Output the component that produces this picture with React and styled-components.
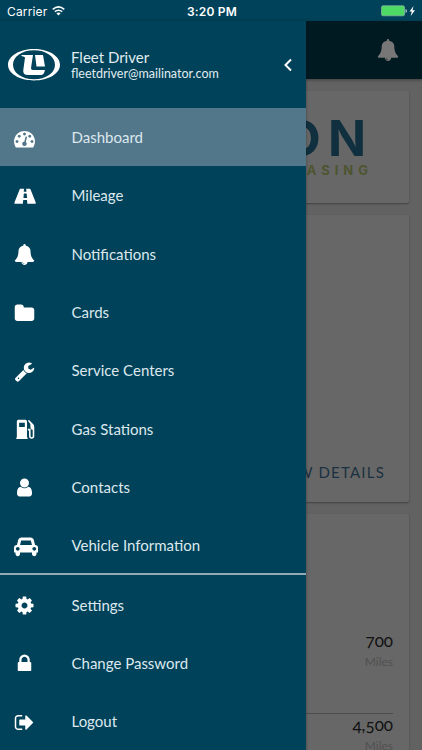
import React from 'react';
import styled, { createGlobalStyle } from 'styled-components';

const GlobalStyle = createGlobalStyle`
    * {
        box-sizing: border-box;
    }
    body {
        margin: 0;
        overflow: hidden;
        font-family: Lato, "Open Sans", sans-serif;
    }
`;

const icons = {
    dashboard: {
        box: '0 0 1792 1792',
        d: 'M384 1152q0-53-37.5-90.5t-90.5-37.5-90.5 37.5-37.5 90.5 37.5 90.5 90.5 37.5 90.5-37.5 37.5-90.5zm192-448q0-53-37.5-90.5t-90.5-37.5-90.5 37.5-37.5 90.5 37.5 90.5 90.5 37.5 90.5-37.5 37.5-90.5zm428 481l101-382q6-26-7.5-48.5t-38.5-29.5-48 6.5-30 39.5l-101 382q-60 5-107 43.5t-63 98.5q-20 77 20 146t117 89 146-20 89-117q16-60-6-117t-72-91zm660-33q0-53-37.5-90.5t-90.5-37.5-90.5 37.5-37.5 90.5 37.5 90.5 90.5 37.5 90.5-37.5 37.5-90.5zm-640-640q0-53-37.5-90.5t-90.5-37.5-90.5 37.5-37.5 90.5 37.5 90.5 90.5 37.5 90.5-37.5 37.5-90.5zm448 192q0-53-37.5-90.5t-90.5-37.5-90.5 37.5-37.5 90.5 37.5 90.5 90.5 37.5 90.5-37.5 37.5-90.5zm320 448q0 261-141 483-19 29-54 29h-1402q-35 0-54-29-141-221-141-483 0-182 71-348t191-286 286-191 348-71 348 71 286 191 191 286 71 348z'
    },
    road: {
        box: '0 0 1920 1792',
        d: 'M1111 1001v-4l-24-320q-1-13-11-22.5t-23-9.5h-186q-13 0-23 9.5t-11 22.5l-24 320v4q-1 12 8 20t21 8h244q12 0 21-8t8-20zm746 451q0 73-46 73h-704q13 0 22-9.5t8-22.5l-20-256q-1-13-11-22.5t-23-9.5h-272q-13 0-23 9.5t-11 22.5l-20 256q-1 13 8 22.5t22 9.5h-704q-46 0-46-73 0-54 26-116l417-1044q8-19 26-33t38-14h339q-13 0-23 9.5t-11 22.5l-15 192q-1 14 8 23t22 9h166q13 0 22-9t8-23l-15-192q-1-13-11-22.5t-23-9.5h339q20 0 38 14t26 33l417 1044q26 62 26 116z'
    },
    bell: {
        box: '0 0 1792 1792',
        d: 'M912 1696q0-16-16-16-59 0-101.5-42.5t-42.5-101.5q0-16-16-16t-16 16q0 73 51.5 124.5t124.5 51.5q16 0 16-16zm816-288q0 52-38 90t-90 38h-448q0 106-75 181t-181 75-181-75-75-181h-448q-52 0-90-38t-38-90q50-42 91-88t85-119.5 74.5-158.5 50-206 19.5-260q0-152 117-282.5t307-158.5q-8-19-8-39 0-40 28-68t68-28 68 28 28 68q0 20-8 39 190 28 307 158.5t117 282.5q0 139 19.5 260t50 206 74.5 158.5 85 119.5 91 88z'
    },
    folder: {
        box: '0 0 1792 1792',
        d: 'M1728 608v704q0 92-66 158t-158 66h-1216q-92 0-158-66t-66-158v-960q0-92 66-158t158-66h320q92 0 158 66t66 158v32h672q92 0 158 66t66 158z'
    },
    wrench: {
        box: '0 0 1792 1792',
        d: 'M448 1472q0-26-19-45t-45-19-45 19-19 45 19 45 45 19 45-19 19-45zm644-420l-682 682q-37 37-90 37-52 0-91-37l-106-108q-38-36-38-90 0-53 38-91l681-681q39 98 114.5 173.5t173.5 114.5zm634-435q0 39-23 106-47 134-164.5 217.5t-258.5 83.5q-185 0-316.5-131.5t-131.5-316.5 131.5-316.5 316.5-131.5q58 0 121.5 16.5t107.5 46.5q16 11 16 28t-16 28l-293 169v224l193 107q5-3 79-48.5t135.5-81 70.5-35.5q15 0 23.5 10t8.5 25z'
    },
    gas: {
        box: '0 0 20 20',
        d: 'M4.2 .8h6.6q1.6 0 1.6 1.6v15.2h.6v1.4h-10.8v-1.4h.5v-15.2q0-1.6 1.5-1.6zm.7 2.7v4h5.4v-4zM13.2 1.6l1.1-.7 3.8 3.8q1.2 1.2 1.2 2.8v9q0 2.3-2.5 2.3t-2.5-2.3v-5.6h-1.1v-1.6h2.6v7.2q0 .8 1 .8t1-.8v-6q-2.2-.8-2.2-3v-2.7z'
    },
    user: {
        box: '0 0 1792 1792',
        d: 'M1536 1399q0 109-62.5 187t-150.5 78h-854q-88 0-150.5-78t-62.5-187q0-85 8.5-160.5t31.5-152 58.5-131 94-89 134.5-34.5q131 128 313 128t313-128q76 0 134.5 34.5t94 89 58.5 131 31.5 152 8.5 160.5zm-256-887q0 159-112.5 271.5t-271.5 112.5-271.5-112.5-112.5-271.5 112.5-271.5 271.5-112.5 271.5 112.5 112.5 271.5z'
    },
    car: {
        box: '0 0 2048 1792',
        d: 'M480 1088q0-66-47-113t-113-47-113 47-47 113 47 113 113 47 113-47 47-113zm36-320h1016l-89-357q-2-8-14-17.5t-21-9.5h-768q-9 0-21 9.5t-14 17.5zm1372 320q0-66-47-113t-113-47-113 47-47 113 47 113 113 47 113-47 47-113zm160-96v384q0 14-9 23t-23 9h-96v128q0 80-56 136t-136 56-136-56-56-136v-128h-1024v128q0 80-56 136t-136 56-136-56-56-136v-128h-96q-14 0-23-9t-9-23v-384q0-93 65.5-158.5t158.5-65.5h28l105-419q23-94 104-157.5t179-63.5h768q98 0 179 63.5t104 157.5l105 419h28q93 0 158.5 65.5t65.5 158.5z'
    },
    cog: {
        box: '0 0 1792 1792',
        d: 'M1152 896q0-106-75-181t-181-75-181 75-75 181 75 181 181 75 181-75 75-181zm512-109v222q0 12-8 23t-20 13l-185 28q-19 54-39 91 35 50 107 138 10 12 10 25t-9 23q-27 37-99 108t-94 71q-12 0-26-9l-138-108q-44 23-91 38-16 136-29 186-7 28-36 28h-222q-14 0-24.5-8.5t-11.5-21.5l-28-184q-49-16-90-37l-141 107q-10 9-25 9-14 0-25-11-126-114-165-168-7-10-7-23 0-12 8-23 15-21 51-66.5t54-70.5q-27-50-41-99l-183-27q-13-2-21-12.5t-8-23.5v-222q0-12 8-23t19-13l186-28q14-46 39-92-40-57-107-138-10-12-10-24 0-10 9-23 26-36 98.5-107.5t94.5-71.5q13 0 26 10l138 107q44-23 91-38 16-136 29-186 7-28 36-28h222q14 0 24.5 8.5t11.5 21.5l28 184q49 16 90 37l142-107q9-9 24-9 13 0 25 10 129 119 165 170 7 8 7 22 0 12-8 23-15 21-51 66.5t-54 70.5q26 50 41 98l183 28q13 2 21 12.5t8 23.5z'
    },
    lock: {
        box: '0 0 1792 1792',
        d: 'M640 768h512v-192q0-106-75-181t-181-75-181 75-75 181v192zm832 96v576q0 40-28 68t-68 28h-960q-40 0-68-28t-28-68v-576q0-40 28-68t68-28h32v-192q0-184 132-316t316-132 316 132 132 316v192h32q40 0 68 28t28 68z'
    },
    logout: {
        box: '0 0 1792 1792',
        d: 'M704 1440q0 4 1 20t.5 26.5-3 23.5-10 19.5-20.5 6.5h-320q-119 0-203.5-84.5t-84.5-203.5v-704q0-119 84.5-203.5t203.5-84.5h320q13 0 22.5 9.5t9.5 22.5q0 4 1 20t.5 26.5-3 23.5-10 19.5-20.5 6.5h-320q-66 0-113 47t-47 113v704q0 66 47 113t113 47h312l11.5 1 11.5 3 8 5.5 7 9 2 13.5zm928-544q0 26-19 45l-544 544q-19 19-45 19t-45-19-19-45v-288h-448q-26 0-45-19t-19-45v-384q0-26 19-45t45-19h448v-288q0-26 19-45t45-19 45 19l544 544q19 19 19 45z'
    }
};

const Icon = ({ name, size = 21 }) => {
    const [, , w, h] = icons[name].box.split(' ').map(Number);
    return (
        <svg viewBox={icons[name].box} height={size} width={size * w / h} fill="currentColor" fillRule="evenodd">
            <path d={icons[name].d} />
        </svg>
    );
};

const Phone = styled.div`
    position: relative;
    display: flex;
    flex-direction: column;
    width: 422px;
    height: 750px;
    overflow: hidden;
    background-color: #626262;
`;

const StatusBar = styled.header`
    display: grid;
    grid-template-columns: 1fr auto 1fr;
    align-items: center;
    flex: none;
    height: 21px;
    padding: 1px 5px 0 7px;
    color: #fff;
    background-color: #004259;
    font-family: Inter, sans-serif;
    font-size: 12px;
`;

const Carrier = styled.div`
    display: flex;
    align-items: center;
    gap: 5px;
    letter-spacing: 0.15px;
`;

const Clock = styled.div`
    font-weight: 600;
    letter-spacing: 0.2px;
`;

const Battery = styled.div`
    display: flex;
    justify-content: flex-end;
`;

const TopBar = styled.div`
    display: flex;
    align-items: center;
    justify-content: flex-end;
    flex: none;
    height: 58px;
    padding-right: 23px;
    color: #777;
    background-color: #001a22;
    box-shadow: 0 1px 3px rgba(0, 0, 0, 0.35);
`;

const Page = styled.main`
    display: flex;
    flex-direction: column;
    gap: 12px;
    padding: 12px 13px 0 12px;
`;

const Card = styled.section`
    display: flex;
    flex-direction: column;
    flex: none;
    align-items: flex-end;
    height: ${({ height }) => height}px;
    border-radius: 2px;
    background-color: #676767;
    box-shadow: 0 1px 2px rgba(0, 0, 0, 0.35);
`;

const Brand = styled.div`
    margin: 19px 36px 0 0;
    color: #11303f;
    font-family: Inter, sans-serif;
    font-size: 50px;
    line-height: 56px;
    font-weight: 700;
    letter-spacing: 7px;
`;

const BrandSub = styled.div`
    margin: -4px 36px 0 0;
    color: #4e5530;
    font-family: Inter, sans-serif;
    font-size: 13px;
    line-height: 16px;
    font-weight: 700;
    letter-spacing: 5px;
`;

const Details = styled.button`
    margin: auto 24px 20px 0;
    padding: 0;
    border: 0;
    background: none;
    color: #1b3141;
    font-family: Lato, sans-serif;
    font-size: 15px;
    line-height: 20px;
    letter-spacing: 1.2px;
`;

const Reading = styled.div`
    display: flex;
    flex-direction: column;
    align-items: flex-end;
    width: 361px;
    height: 84px;
    margin-right: 16px;
    border-bottom: ${({ last }) => (last ? 0 : '1px solid #4c4c4c')};
`;

const Amount = styled.div`
    color: #111;
    font-size: 17px;
    line-height: 22px;
    font-variant-numeric: oldstyle-nums;
`;

const Unit = styled.div`
    color: #505050;
    font-size: 12px;
    line-height: 20px;
`;

const Drawer = styled.nav`
    position: absolute;
    top: 21px;
    left: 0;
    width: 306px;
    height: 729px;
    color: #fff;
    background-color: #004259;
    box-shadow: 1px 0 2px rgba(0, 0, 0, 0.2);
`;

const Profile = styled.div`
    display: flex;
    align-items: center;
    height: 87px;
    padding: 0 12px 0 7px;
`;

const ProfileText = styled.div`
    flex-grow: 1;
    margin-left: 10px;
`;

const Name = styled.div`
    font-size: 15px;
    line-height: 18px;
    color: #e2ecf0;
`;

const Email = styled.div`
    font-size: 12.5px;
    line-height: 16px;
    color: #e2ecf0;
`;

const MenuItem = styled.div`
    display: flex;
    align-items: center;
    height: 58.3px;
    padding-left: 14px;
    background-color: ${({ active }) => (active ? '#52768a' : 'transparent')};
`;

const IconBox = styled.span`
    display: flex;
    align-items: center;
    flex: none;
    width: 57.5px;
    padding-top: 2px;
`;

const Label = styled.span`
    color: #dce8ee;
    font-size: 15px;
    letter-spacing: ${({ spacing }) => spacing || 0}px;
`;

const Divider = styled.div`
    height: 2px;
    margin-top: -1px;
    background-color: #91a9b5;
`;

const mainItems = [
    { icon: 'dashboard', label: 'Dashboard', active: true },
    { icon: 'road', label: 'Mileage' },
    { icon: 'bell', label: 'Notifications' },
    { icon: 'folder', label: 'Cards' },
    { icon: 'wrench', label: 'Service Centers' },
    { icon: 'gas', label: 'Gas Stations' },
    { icon: 'user', label: 'Contacts' },
    { icon: 'car', label: 'Vehicle Information' }
];

const accountItems = [
    { icon: 'cog', label: 'Settings' },
    { icon: 'lock', label: 'Change Password' },
    { icon: 'logout', label: 'Logout' }
];

const Menu = ({ items }) => items.map(item => (
    <MenuItem key={item.label} active={item.active}>
        <IconBox><Icon name={item.icon} /></IconBox>
        <Label spacing={item.spacing}>{item.label}</Label>
    </MenuItem>
));

const Logo = () => (
    <svg width="54" height="34" viewBox="0 0 54 34" fill="#fff">
        <path fillRule="evenodd" d="M27 1C41.500 1 53 8 53 16.800S41.500 32.500 27 32.500 1 25.500 1 16.800 12.500 1 27 1zm0 1.300C15 2.300 6 8.500 6 16.700S15 31.200 27 31.200s21-6.300 21-14.500S39 2.300 27 2.300z" />
        <path d="M14.500 7H26l-2 13q-.3 2 2 2h12l-1 3q-.7 2-3 2H21q-5.500 0-4.700-5L18 9.500q-.2-1-3.500-1.500zM28 7h8l2 11.500h-8.500z" />
    </svg>
);

const App = () => (
    <Phone>
        <GlobalStyle />
        <StatusBar>
            <Carrier>
                Carrier
                <svg width="13" height="10" viewBox="0 0 13 10" fill="none" stroke="#fff" strokeWidth="1.5">
                    <path d="M.7 3.300Q6.500-1.500 12.300 3.300M2.800 5.600Q6.500 2.700 10.200 5.600" />
                    <path d="M4.400 7.200Q6.500 5.700 8.600 7.200L6.500 9.400z" fill="#fff" stroke="none" />
                </svg>
            </Carrier>
            <Clock>3:20 PM</Clock>
            <Battery>
                <svg width="36" height="12" viewBox="0 0 36 12">
                    <rect x=".5" y=".8" width="23" height="10" rx="1.500" fill="#4cd964" stroke="#8fb8a8" strokeWidth=".7" />
                    <path d="M24.500 4q1.500 .3 1.500 2t-1.500 2z" fill="#b9cdd3" />
                    <path d="M32.500 1L28.500 6.500h2.300L29.700 11l4.300-5.800h-2.500z" fill="#fff" />
                </svg>
            </Battery>
        </StatusBar>
        <TopBar><Icon name="bell" size={22} /></TopBar>
        <Page>
            <Card height={112}>
                <Brand>UNION</Brand>
                <BrandSub>LEASING</BrandSub>
            </Card>
            <Card height={287}>
                <Details>VIEW DETAILS</Details>
            </Card>
            <Card height={300}>
                <Reading style={{ marginTop: 116 }}>
                    <Amount>700</Amount>
                    <Unit>Miles</Unit>
                </Reading>
                <Reading last>
                    <Amount>4,500</Amount>
                    <Unit>Miles</Unit>
                </Reading>
            </Card>
        </Page>
        <Drawer>
            <Profile>
                <Logo />
                <ProfileText>
                    <Name>Fleet Driver</Name>
                    <Email>fleetdriver@mailinator.com</Email>
                </ProfileText>
                <svg width="12" height="14" viewBox="0 0 12 14" fill="none" stroke="#fff" strokeWidth="2">
                    <path d="M9 1.500L3.500 7 9 12.500" />
                </svg>
            </Profile>
            <Menu items={mainItems} />
            <Divider />
            <Menu items={accountItems} />
        </Drawer>
    </Phone>
);

export default App;
